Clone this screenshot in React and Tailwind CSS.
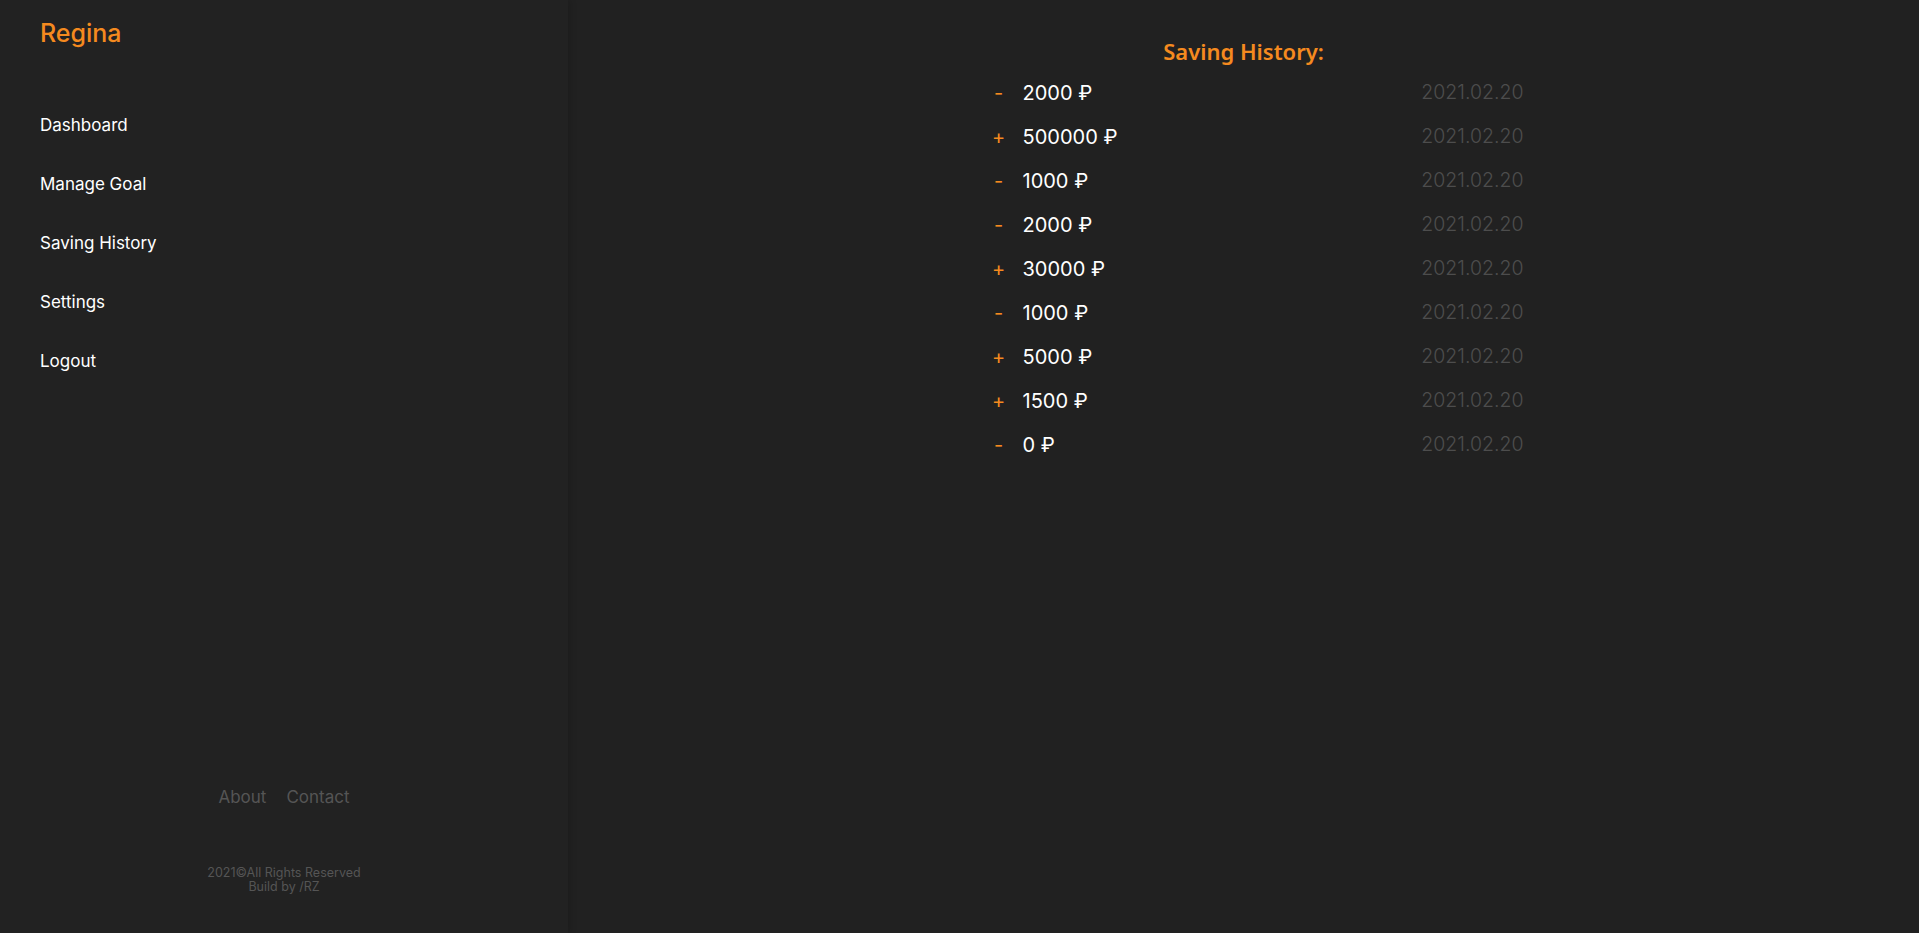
const links = ['Dashboard', 'Manage Goal', 'Saving History', 'Settings', 'Logout'];

const history = [
  { sign: '-', amount: 2000 },
  { sign: '+', amount: 500000 },
  { sign: '-', amount: 1000 },
  { sign: '-', amount: 2000 },
  { sign: '+', amount: 30000 },
  { sign: '-', amount: 1000 },
  { sign: '+', amount: 5000 },
  { sign: '+', amount: 1500 },
  { sign: '-', amount: 0 },
];

const Sidebar = () => (
  <aside className="relative z-10 w-[568px] shrink-0 h-screen bg-[#222222] shadow-[3px_0_6px_rgba(0,0,0,0.12)] flex flex-col px-[40px]">
    <h1 className="mt-[17px] text-[25px] leading-[32px] font-medium text-[#f58a1f]">Regina</h1>
    <nav className="mt-[64px] flex flex-col gap-[35px]">
      {links.map((l) => (
        <a key={l} href="#" className="text-[17px] leading-[24px] text-white w-fit">{l}</a>
      ))}
    </nav>
    <div className="mt-auto pb-[39px] flex flex-col items-center text-[#555555] -mx-[40px]">
      <div className="flex gap-[20px] text-[17px] leading-[24px]">
        <a href="#">About</a>
        <a href="#">Contact</a>
      </div>
      <div className="mt-[57px] text-[12.5px] leading-[14px] text-center">
        <p>2021©All Rights Reserved</p>
        <p>Build by /RZ</p>
      </div>
    </div>
  </aside>
);

const App = () => (
  <div className="flex h-screen bg-[#212121]" style={{ fontFamily: 'Inter, "Noto Sans", sans-serif' }}>
    <Sidebar />
    <main className="flex-1 flex flex-col items-center">
      <h2 className="mt-[37px] text-[22px] leading-[28px] font-semibold text-[#f58a1f]" style={{ fontFamily: '"Noto Sans", sans-serif' }}>
        Saving History:
      </h2>
      <ul className="mt-[6px] w-[560px] pl-[27px]">
        {history.map((h, i) => (
          <li key={i} className="h-[44px] flex items-center">
            <span className="w-[16px] text-center text-[20px] text-[#f58a1f]">{h.sign}</span>
            <span className="ml-[16px] text-[20px] text-white">{h.amount} ₽</span>
            <span className="ml-auto text-[19.5px] font-light text-[#4d4d4d]">2021.02.20</span>
          </li>
        ))}
      </ul>
    </main>
  </div>
);

export default App;
